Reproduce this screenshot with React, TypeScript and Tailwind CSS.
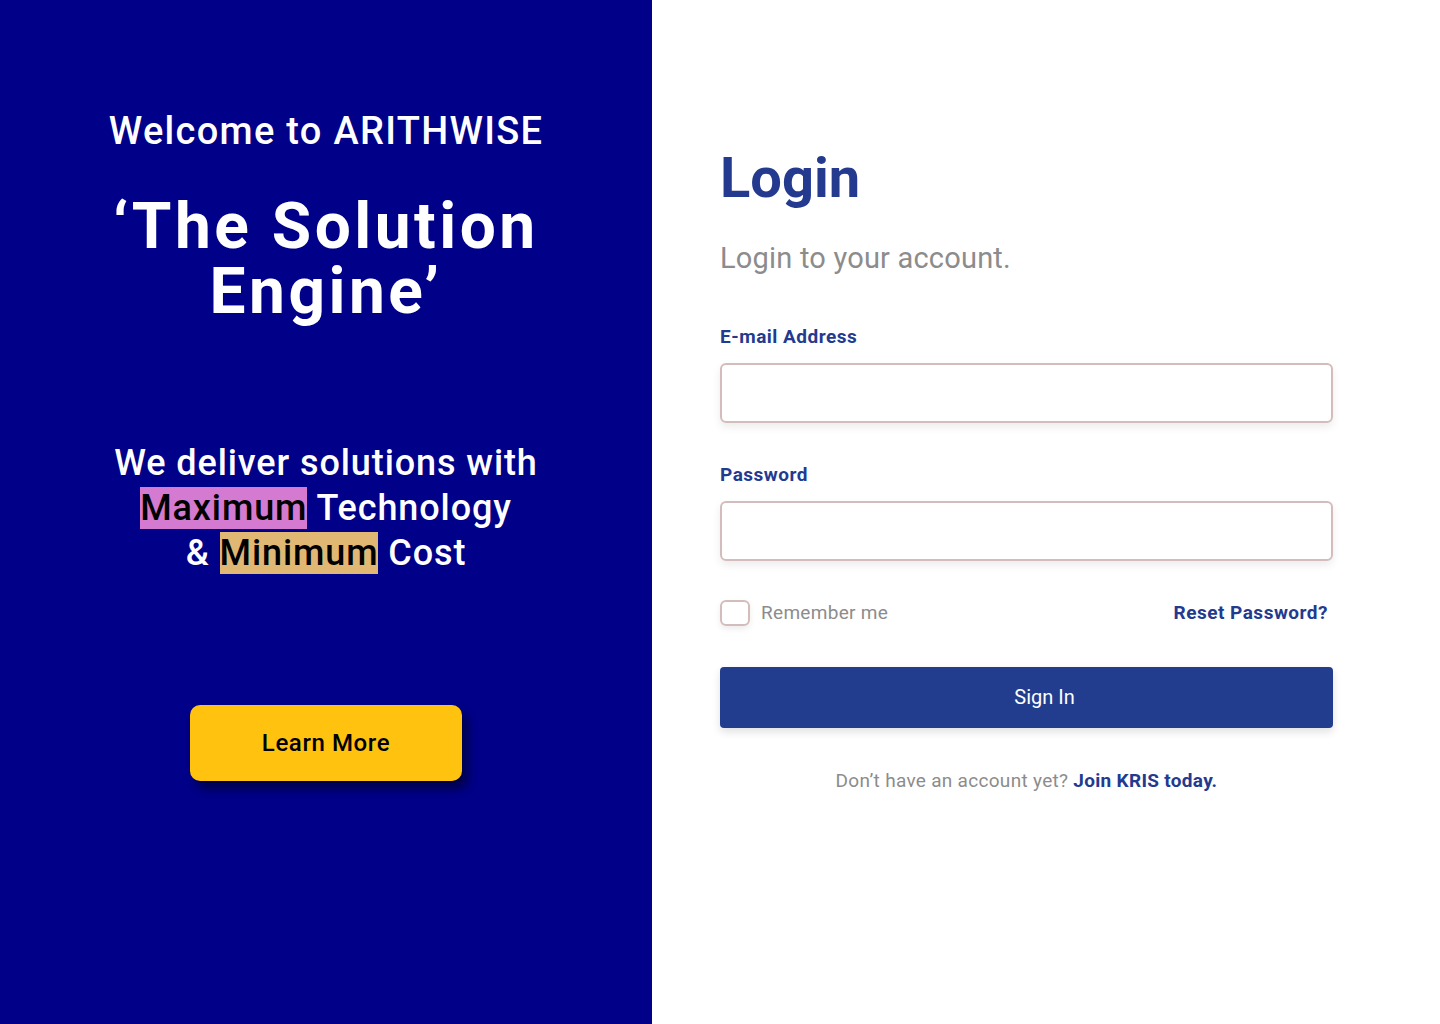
import React from "react";

export default function App() {
  const font = { fontFamily: "Roboto, 'Noto Sans', sans-serif" } as React.CSSProperties;
  return (
    <div className="flex w-[1440px] h-[1024px]" style={font}>
      <div className="w-[652px] h-full bg-[#000088] flex flex-col items-center text-white">
        <h2 className="mt-[105px] text-[38px] leading-[52px] font-medium tracking-[1.3px]">Welcome to ARITHWISE</h2>
        <h1 className="mt-[37px] text-[64px] leading-[65px] font-bold text-center tracking-[3.5px]">
          ‘The Solution
          <br />
          Engine’
        </h1>
        <p className="mt-[117px] text-[36px] leading-[45px] font-medium text-center tracking-[0.9px]">
          We deliver solutions with
          <br />
          <span className="bg-[#d47ad0] text-black">Maximum</span> Technology
          <br />
          &amp; <span className="bg-[#e0b874] text-black">Minimum</span> Cost
        </p>
        <button className="mt-[129px] w-[272px] h-[76px] rounded-[10px] bg-[#ffc20e] text-black text-[24px] font-medium tracking-[0.6px] shadow-[6px_8px_10px_rgba(0,0,0,0.45)]">
          Learn More
        </button>
      </div>
      <div className="flex-1 h-full bg-white pl-[68px] pr-[107px]">
        <h1 className="mt-[146px] text-[56px] leading-[64px] font-bold text-[#233a8f]">Login</h1>
        <p className="mt-[30px] text-[29px] leading-[36px] text-[#8c8c8c] tracking-[0.2px]">Login to your account.</p>
        <label className="block mt-[48px] text-[19px] leading-[26px] font-bold text-[#233a8f] tracking-[0.5px]">E-mail Address</label>
        <input className="block mt-[13px] w-full h-[60px] rounded-[6px] border-2 border-[#d4bcbc] shadow-[0_4px_8px_rgba(0,0,0,0.08)] outline-none" />
        <label className="block mt-[39px] text-[19px] leading-[26px] font-bold text-[#233a8f] tracking-[0.5px]">Password</label>
        <input type="password" className="block mt-[13px] w-full h-[60px] rounded-[6px] border-2 border-[#d4bcbc] shadow-[0_4px_8px_rgba(0,0,0,0.08)] outline-none" />
        <div className="mt-[38px] flex items-center justify-between">
          <div className="flex items-center">
            <span className="w-[30px] h-[26px] rounded-[6px] border-2 border-[#d4bcbc] shadow-[0_3px_6px_rgba(0,0,0,0.08)]" />
            <span className="ml-[11px] text-[19px] text-[#8c8c8c] tracking-[0.3px]">Remember me</span>
          </div>
          <span className="mr-[5px] text-[19px] font-bold text-[#233a8f] tracking-[0.5px]">Reset Password?</span>
        </div>
        <button className="mt-[39px] w-full h-[61px] rounded-[4px] bg-[#233d8e] text-white text-[20px] pl-[36px] shadow-[0_4px_8px_rgba(0,0,0,0.12)]">
          Sign In
        </button>
        <p className="mt-[39px] text-center text-[19px] text-[#8c8c8c] tracking-[0.3px]">
          Don’t have an account yet? <span className="font-bold text-[#233a8f]">Join KRIS today.</span>
        </p>
      </div>
    </div>
  );
}
